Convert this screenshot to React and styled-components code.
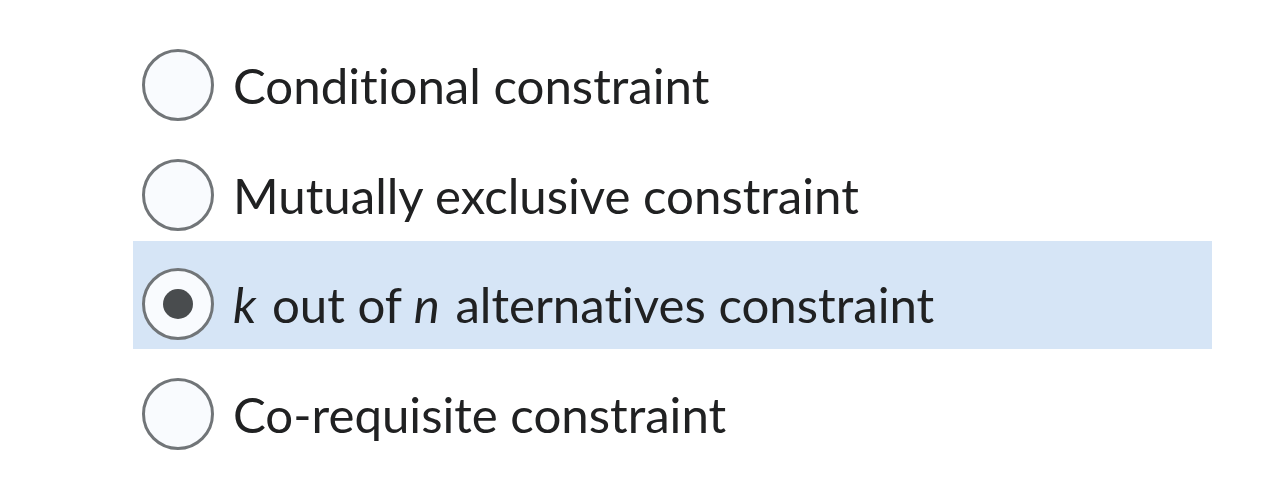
import React, { useState } from "react";
import styled, { createGlobalStyle } from "styled-components";

const GlobalStyle = createGlobalStyle`
  body {
    margin: 0;
    background: #ffffff;
    font-family: Lato, "Noto Sans", sans-serif;
  }
`;

const Group = styled.div`
  display: flex;
  flex-direction: column;
  gap: 1.5px;
  width: 1079px;
  margin-left: 133px;
  padding-top: 22px;
`;

const Option = styled.label`
  display: flex;
  align-items: center;
  gap: 19px;
  box-sizing: border-box;
  height: 108px;
  padding: 27px 9px 9px;
  background: ${(p) => (p.$selected ? "#d6e5f6" : "transparent")};
  cursor: pointer;
`;

const Radio = styled.span`
  flex: none;
  display: flex;
  align-items: center;
  justify-content: center;
  box-sizing: border-box;
  width: 72px;
  height: 72px;
  border-radius: 50%;
  border: 3px solid #717578;
  background: #f9fbfe;
`;

const Dot = styled.span`
  width: 30px;
  height: 30px;
  border-radius: 50%;
  background: #494c4e;
`;

const Label = styled.span`
  font-size: 49.2px;
  line-height: 1;
  color: #202122;
  white-space: nowrap;
  font-variant-ligatures: none;
  font-feature-settings: "liga" 0;

  em {
    font-style: italic;
    margin-right: 3px;
  }
`;

const options = [
  { id: "conditional", label: "Conditional constraint" },
  { id: "exclusive", label: "Mutually exclusive constraint" },
  {
    id: "k-of-n",
    label: (
      <>
        <em>k</em> out of <em>n</em> alternatives constraint
      </>
    ),
  },
  { id: "coreq", label: "Co-requisite constraint" },
];

export default function App() {
  const [value, setValue] = useState("k-of-n");
  return (
    <>
      <GlobalStyle />
      <Group role="radiogroup">
        {options.map((o) => (
          <Option
            key={o.id}
            $selected={value === o.id}
            onClick={() => setValue(o.id)}
          >
            <Radio role="radio" aria-checked={value === o.id}>
              {value === o.id && <Dot />}
            </Radio>
            <Label>{o.label}</Label>
          </Option>
        ))}
      </Group>
    </>
  );
}
